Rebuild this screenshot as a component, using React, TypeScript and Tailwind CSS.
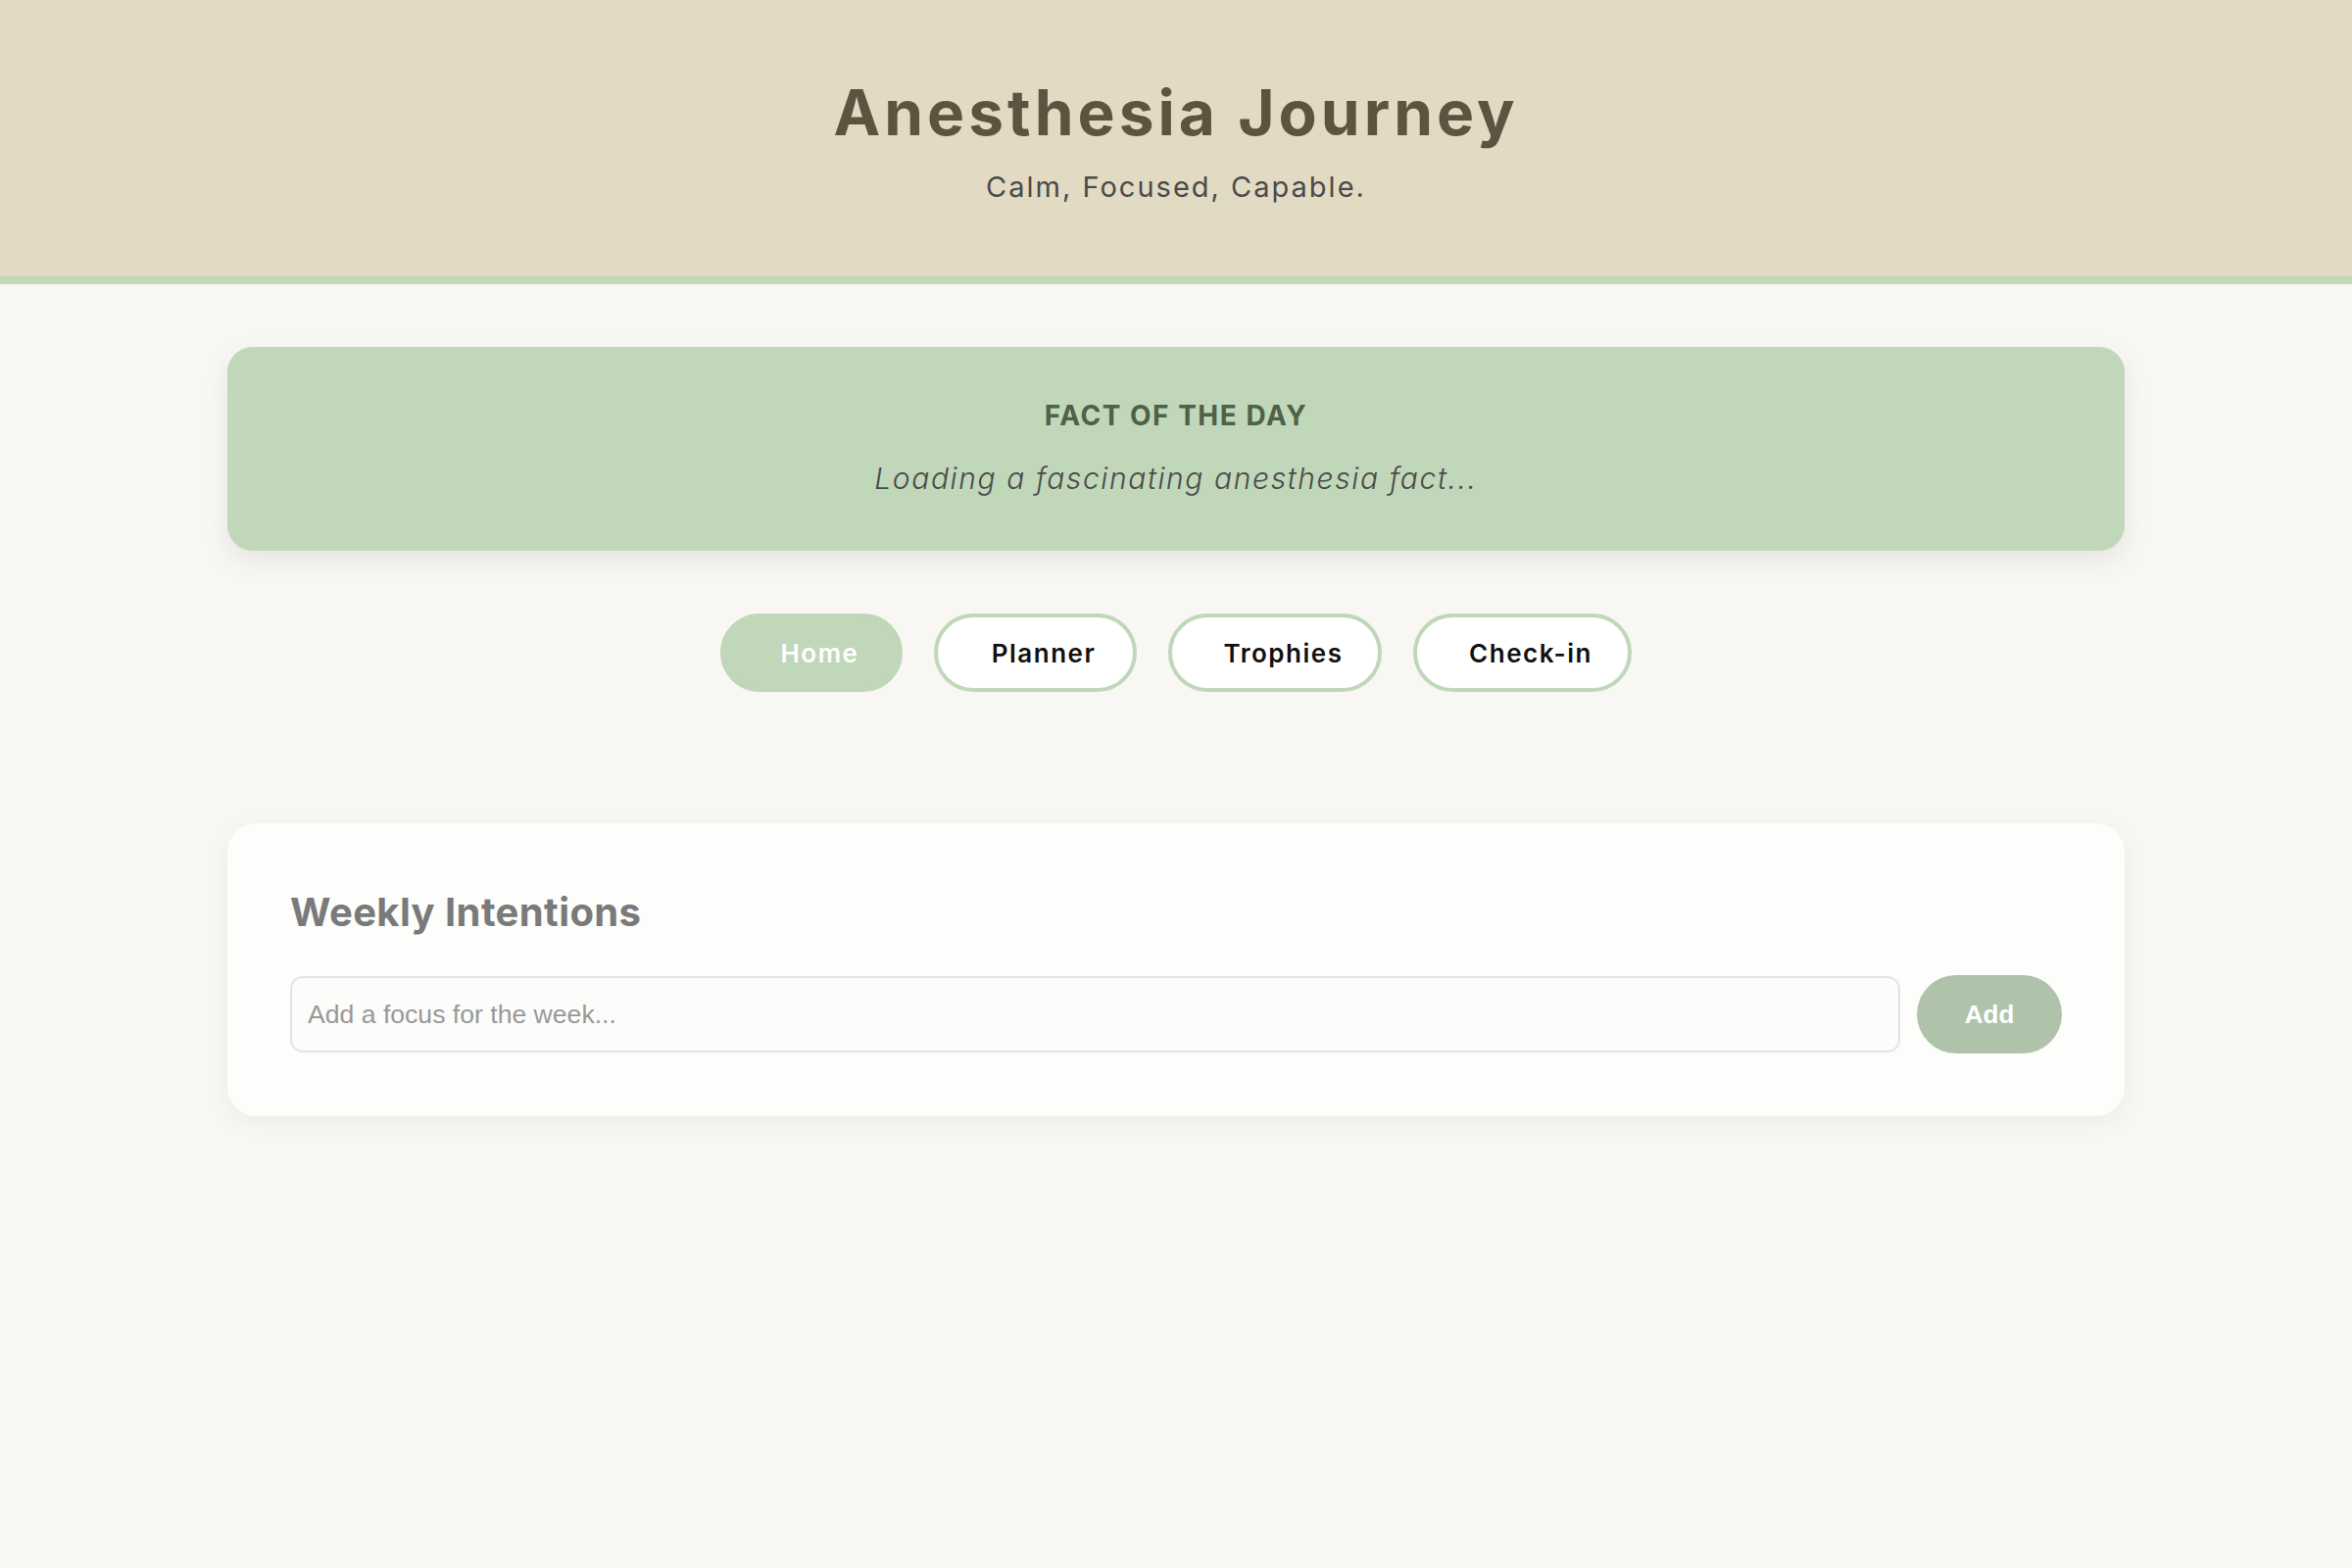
import React from "react";

const navItems = [
  { label: "Home", active: true, w: "w-[186px]" },
  { label: "Planner", active: false, w: "w-[207px]" },
  { label: "Trophies", active: false, w: "w-[218px]" },
  { label: "Check-in", active: false, w: "w-[223px]" },
];

export default function App() {
  return (
    <div className="min-h-screen bg-[#f8f7f3] font-['Inter',sans-serif]">
      <header className="bg-[#e2dac2] border-b-[8px] border-[#c0d7b9] pt-[76px] pb-[73px] text-center">
        <h1 className="text-[64px] leading-[78px] font-bold text-[#5c5440] tracking-[4px]">
          Anesthesia Journey
        </h1>
        <p className="mt-[19px] text-[29px] leading-[36px] text-[#4a4a4a] tracking-[2px]">
          Calm, Focused, Capable.
        </p>
      </header>

      <main className="max-w-[1936px] mx-auto">
        <section className="mt-[64px] bg-[#c0d7b9] rounded-[26px] shadow-[0_10px_28px_rgba(0,0,0,0.08)] pt-[52px] pb-[54px] text-center">
          <h2 className="text-[28px] leading-[36px] font-bold uppercase text-[#4f6147] tracking-[1.5px]">
            Fact of the Day
          </h2>
          <p className="mt-[26px] text-[30px] leading-[40px] italic font-light text-[#4a4a4a] tracking-[1.6px]">
            Loading a fascinating anesthesia fact...
          </p>
        </section>

        <nav className="mt-[64px] flex justify-center gap-8">
          {navItems.map((n) => (
            <button
              key={n.label}
              className={`${n.w} h-[80px] rounded-full border-[4px] border-[#c0d7b9] pl-[17px] flex items-center justify-center text-[26px] font-semibold tracking-[1.5px] ${
                n.active ? "bg-[#c0d7b9] text-white" : "bg-white text-[#111]"
              }`}
            >
              {n.label}
            </button>
          ))}
        </nav>

        <section className="mt-[134px] bg-[#fdfdfb] rounded-[30px] shadow-[0_6px_24px_rgba(0,0,0,0.05)] px-[64px] pt-[67px] pb-[64px]">
          <h3 className="text-[40px] leading-[48px] font-bold text-[#7a7a7a] tracking-[0.4px]">
            Weekly Intentions
          </h3>
          <div className="mt-[40px] flex items-center gap-[17px]">
            <input
              type="text"
              placeholder="Add a focus for the week..."
              className="flex-1 h-[78px] rounded-[13px] border-2 border-[#e4e4e2] bg-[#fcfcfa] px-[16px] text-[26.6px] font-['Liberation_Sans',Arial,sans-serif] placeholder:text-[#999] outline-none"
            />
            <button className="w-[148px] h-[80px] rounded-full bg-[#afc3aa] text-white text-[26px] font-bold font-['Liberation_Sans',Arial,sans-serif]">
              Add
            </button>
          </div>
        </section>
      </main>
    </div>
  );
}
